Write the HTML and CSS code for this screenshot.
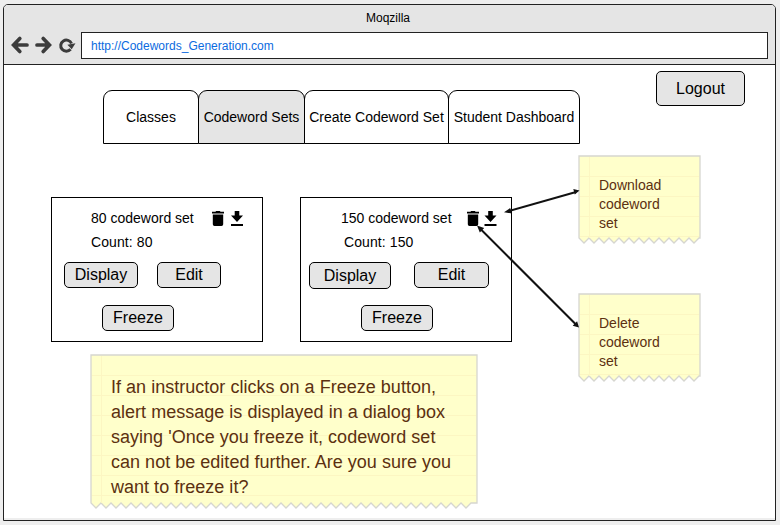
FILE: index.html
```html
<!DOCTYPE html>
<html lang="en">
<head>
<meta charset="utf-8">
<title>Moqzilla</title>
<link rel="stylesheet" href="styles.css">
</head>
<body>
<svg class="defs" width="0" height="0">
  <symbol id="trash" viewBox="0 0 12 15"><path d="M0 .8h3.4L4.200 0h3.600l.8.800H12v1.700H0zM.8 3.500h10.400v9.800q0 1.700-1.700 1.700h-7q-1.700 0-1.700-1.700z"/></symbol>
  <symbol id="download" viewBox="0 0 12 15"><path d="M3.700 0h4.600v4.500H12L6 11 0 4.500h3.700zM0 13h12v2H0z"/></symbol>
</svg>
<div class="window">
  <header class="chrome">
    <div class="title">Moqzilla</div>
    <div class="toolbar">
      <svg class="nav" width="66" height="20" viewBox="0 0 66 20">
        <g fill="none" stroke="#3c3c3c" stroke-width="3.700">
          <path d="M8.800 3.500L2.600 10l6.200 6.500M3 10h13" stroke-linecap="round"/>
          <path d="M32.200 3.500l6.200 6.500-6.200 6.500M38 10H26" stroke-linecap="round"/>
          <path d="M59.600 14.300A5.600 5.600 0 1 1 60.500 8.500" stroke-width="3"/>
        </g>
        <path d="M56.400 9.800L64.500 8.300L60.700 14.200z" fill="#3c3c3c"/>
      </svg>
      <div class="address">http://Codewords_Generation.com</div>
    </div>
  </header>
  <main class="page">
    <div class="top">
      <nav class="tabs">
        <div class="tab classes">Classes</div>
        <div class="tab sets active">Codeword Sets</div>
        <div class="tab create">Create Codeword Set</div>
        <div class="tab dashboard">Student Dashboard</div>
      </nav>
      <button class="btn logout">Logout</button>
    </div>
    <div class="cards">
      <section class="card first">
        <div class="head"><span class="name">80 codeword set</span><svg class="icon" width="12" height="15"><use href="#trash"/></svg><svg class="icon" width="12" height="15"><use href="#download"/></svg></div>
        <div class="count">Count: 80</div>
        <div class="actions"><button class="btn display">Display</button><button class="btn edit">Edit</button></div>
        <button class="btn freeze">Freeze</button>
      </section>
      <section class="card second">
        <div class="head"><span class="name">150 codeword set</span><svg class="icon" width="12" height="15"><use href="#trash"/></svg><svg class="icon" width="13" height="15"><use href="#download"/></svg></div>
        <div class="count">Count: 150</div>
        <div class="actions"><button class="btn display">Display</button><button class="btn edit">Edit</button></div>
        <button class="btn freeze">Freeze</button>
      </section>
    </div>
    <aside class="note small download"><svg class="paper" width="124" height="90"></svg><p>Download<br>codeword<br>set</p></aside>
    <aside class="note small delete"><svg class="paper" width="124" height="90"></svg><p>Delete<br>codeword<br>set</p></aside>
    <aside class="note large"><svg class="paper" width="389" height="156"></svg><p>If an instructor clicks on a Freeze button,<br>alert message is displayed in a dialog box<br>saying 'Once you freeze it, codeword set<br>can not be edited further. Are you sure you<br>want to freeze it?</p></aside>
    <svg class="arrows" width="110" height="145" viewBox="473 185 110 145">
      <g stroke="#111" stroke-width="2"><path d="M508 211.200L576 192"/><path d="M481 229.500L576 324.500"/></g>
      <g fill="#111"><path d="M504 212.300l6.200-4.300 1.500 5.400zM579.500 190.600l-6.200-1.500 1.500 5.400zM477 225.500l7.200 2.500-4.400 4.400zM579 327.500l-6.300-1.800 4.400-4.400z"/></g>
    </svg>
  </main>
</div>
<script src="notes.js"></script>
</body>
</html>
```
FILE: styles.css
```css
* { box-sizing: border-box; }
body {
  margin: 0;
  padding: 4px 4px 4px 3px;
  height: 525px;
  overflow: hidden;
  background: #eee;
  font-family: "Liberation Sans", Arial, sans-serif;
  font-size: 14px;
  color: #000;
}
.defs { position: absolute; }
.window {
  width: 773px;
  height: 517px;
  border: 1px solid #222;
  border-radius: 5px 5px 0 0;
  background: #fff;
  overflow: hidden;
}
.chrome { height: 60px; background: #e5e5e5; border-bottom: 1px solid #222; }
.title { height: 27px; line-height: 26px; text-align: center; font-size: 12px; padding-right: 3px; }
.toolbar { display: flex; padding-left: 7px; }
.nav { margin: 3px 4px 0 0; }
.address {
  width: 687px;
  height: 27px;
  border: 1px solid #222;
  background: #fff;
  padding-left: 9px;
  line-height: 26px;
  font-size: 12px;
  color: #0b6be0;
}
.page { position: relative; height: 455px; border-bottom: 2px solid #eee; }
.top { display: flex; padding: 6px 0 0 99px; height: 132px; align-items: flex-start; }
.tabs { display: flex; margin-top: 19px; width: 477px; }
.tab {
  height: 54px;
  border: 1px solid #000;
  border-radius: 9px 9px 0 0;
  line-height: 52px;
  text-align: center;
  white-space: nowrap;
}
.tab + .tab { margin-left: -1px; }
.tab.active { background: #e5e5e5; }
.classes { width: 96px; }
.sets { width: 107px; }
.create { width: 145px; }
.dashboard { width: 132px; }
.btn {
  display: block;
  height: 26px;
  padding: 0;
  border: 1px solid #000;
  border-radius: 5px;
  background: #e5e5e5;
  font: 16px/24px "Liberation Sans", Arial, sans-serif;
  color: #000;
}
.btn.logout { width: 89px; height: 35px; margin-left: 76px; }
.cards { display: flex; gap: 37px; padding-left: 47px; }
.card { width: 212px; height: 145px; border: 1px solid #000; }
.head { display: flex; align-items: center; height: 20px; margin-top: 10px; }
.name { white-space: nowrap; box-sizing: content-box; }
.count { height: 20px; line-height: 20px; margin-top: 4px; letter-spacing: 0.1px; }
.actions { display: flex; height: 27px; margin-top: 10px; }
.btn.freeze { width: 72px; margin-top: 16px; }
.first .name { width: 121px; padding-left: 39px; }
.first .icon + .icon { margin-left: 7px; }
.first .count { padding-left: 39px; }
.first .display { width: 74px; margin-left: 12px; }
.first .edit { width: 64px; margin-left: 19px; }
.first .freeze { margin-left: 50px; }
.second .name { padding-left: 40px; width: 126px; }
.second .icon + .icon { margin-left: 5px; }
.second .count { padding-left: 43px; }
.second .display { width: 82px; height: 27px; margin-left: 8px; }
.second .edit { width: 75px; margin-left: 23px; }
.second .freeze { margin-left: 60px; }
.note { position: absolute; color: #5c3010; white-space: nowrap; }
.paper { position: absolute; left: 0; top: 0; }
.note p { position: relative; margin: 0; }
.small { width: 124px; height: 90px; padding: 21px 0 0 21px; line-height: 19px; }
.note.download { left: 574px; top: 90px; }
.note.delete { left: 574px; top: 228px; }
.large { left: 86px; top: 289px; width: 389px; height: 156px; padding: 21px 0 0 21px; font-size: 18px; line-height: 25px; letter-spacing: 0.02px; }
.arrows { position: absolute; left: 469px; top: 120px; }
```
FILE: notes.js
```js
// Draws the ruled paper with a torn lower edge behind every note.
document.querySelectorAll('.paper').forEach(function (svg) {
  var w = +svg.getAttribute('width') - 2;
  var h = +svg.getAttribute('height') - 7;
  var d = 'M1 1H' + w + 'V' + h;
  var n = Math.floor((w - 1) / 10);
  for (var x = 1 + n * 10; x > 1; x -= 10) {
    d += 'L' + x + ' ' + h + 'L' + (x - 5) + ' ' + (h + 5);
  }
  d += 'L1 ' + h + 'Z';
  var rules = 'M11.5 2V' + h;
  for (var y = 21.5; y < h; y += 20) {
    rules += 'M2 ' + y + 'H' + (w - 1);
  }
  svg.innerHTML = '<path d="' + d + '" fill="#ffffcb" stroke="#d6d6d0" stroke-width="1.300"/>' +
    '<path d="' + rules + '" stroke="#fcf6c2" fill="none"/>';
});
```
